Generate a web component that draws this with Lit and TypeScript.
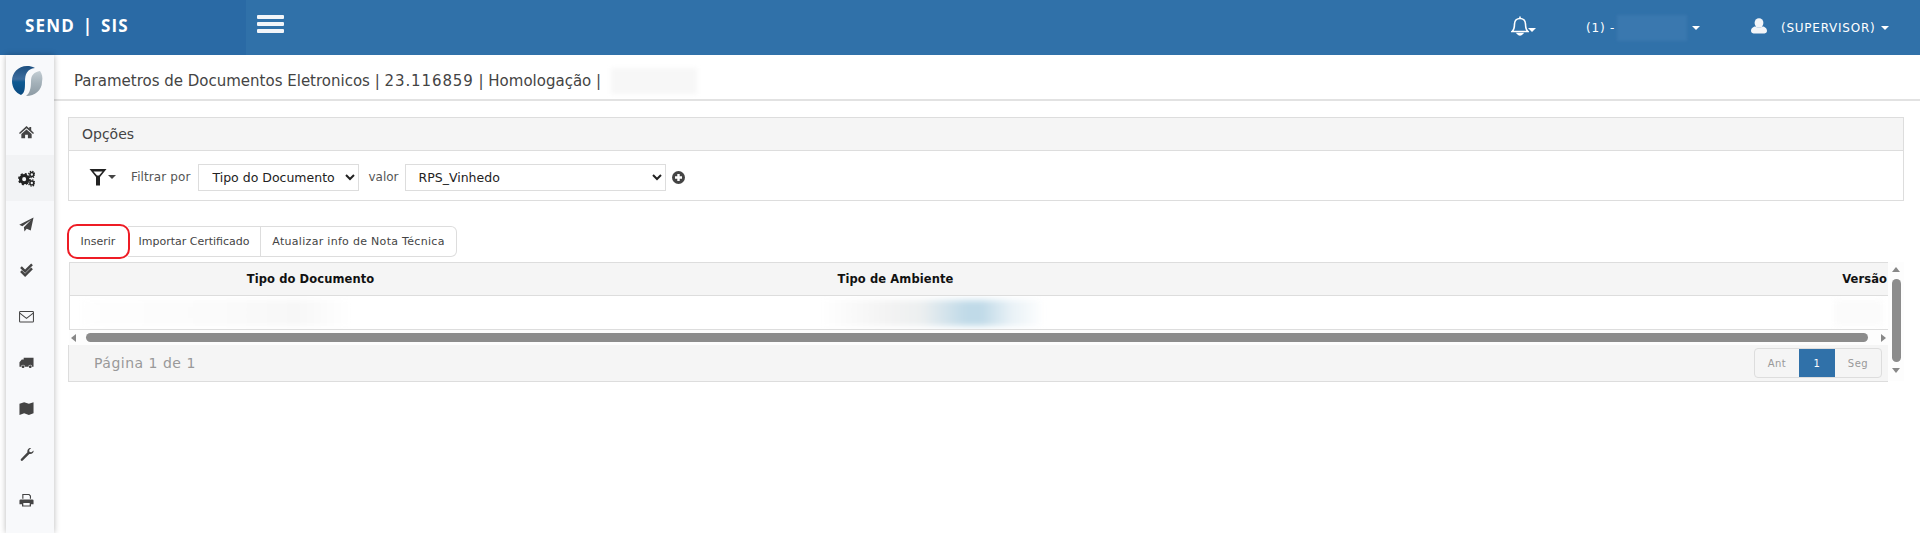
import { LitElement, html, css, svg } from "lit";
import { customElement } from "lit/decorators.js";

const icons = [
  svg`<path d="M8 1 L11 3.8 V2 H13 V5.7 L16 8.5 L15 9.6 L8 3.4 L1 9.6 L0 8.5 Z M8 4.8 L13.5 9.6 V14 H9.5 V10.5 H6.5 V14 H2.5 V9.6 Z"/>`,
  svg`<g fill="none" stroke="#222"><circle cx="5.8" cy="8.6" r="3.4" stroke-width="3"/><circle cx="5.8" cy="8.6" r="5" stroke-width="1.6" stroke-dasharray="2 1.93"/><circle cx="13" cy="4.2" r="1.8" stroke-width="1.4"/><circle cx="13" cy="4.2" r="3" stroke-width="1.1" stroke-dasharray="1.3 1.06"/><circle cx="13" cy="12.2" r="1.8" stroke-width="1.4"/><circle cx="13" cy="12.2" r="3" stroke-width="1.1" stroke-dasharray="1.3 1.06"/></g>`,
  svg`<path d="M15.5 .5 L12.5 14.5 L8.2 12.5 L5.8 15.5 L5.2 10.8 L13 3 L3.6 9.8 L.3 8.2 Z"/>`,
  svg`<path d="M1.2 5.2 L3 3.4 L6.5 6.9 L13 .5 L14.8 2.3 L6.5 10.6 Z M1.2 9.5 L3 7.7 L6.5 11.2 L13 4.8 L14.8 6.6 L6.5 14.9 Z"/>`,
  svg`<g fill="none" stroke="#444" stroke-width="1.1"><rect x=".6" y="2.6" width="14.8" height="11.2" rx=".8"/><path d="M.8 4.4 L8 10 L15.2 4.4"/></g>`,
  svg`<path d="M5 3 H15.5 V12.5 H14 a2 2 0 0 0 -4 0 H6.3 a2 2 0 0 0 -4 0 H.5 V7.8 L3 4.8 H5 Z M4.3 11 a1.5 1.5 0 1 1 -.01 0 Z M12 11 a1.5 1.5 0 1 1 -.01 0 Z"/>`,
  svg`<path d="M.5 2.8 L5.5 1.2 L10.5 2.8 L15.5 1.2 V13 L10.5 14.8 L5.5 13 L.5 14.8 Z"/>`,
  svg`<path d="M15.6 3.6 C15.8 6 13.6 8 11 7.4 L4 14.5 C2.8 15.6 1 14 2.1 12.8 L9 5.6 C8.4 3 10.4 .6 13 1 L10.8 3.2 L11.3 5.2 L13.3 5.7 Z"/>`,
  svg`<path d="M3.5 1 H11 L12.8 2.8 V6 H11.6 V3.5 L10.4 2.2 H4.7 V6 H3.5 Z M1.8 6.8 H14.2 Q15.5 6.8 15.5 8 V12 H12.8 V14.5 H3.2 V12 H.5 V8 Q.5 6.8 1.8 6.8 Z M4.6 10.6 V13.3 H11.4 V10.6 Z"/>`,
];

@customElement("app-root")
export class AppRoot extends LitElement {
  static styles = css`
    :host { display: block; height: 533px; overflow: hidden; background: #fff; font-family: "DejaVu Sans", Verdana, sans-serif; color: #333; }
    .topbar { display: flex; height: 55px; background: #3071a9; color: #fff; }
    .brand { width: 246px; background: #2a6aa5; padding: 16px 0 0 25px; box-sizing: border-box; font: bold 17px/20px "Open Sans", sans-serif; word-spacing: 2px; letter-spacing: 1.2px; }
    .burger { margin: 15px 0 0 11px; width: 27px; height: 18px; display: flex; flex-direction: column; gap: 3px; }
    .burger i { display: block; height: 4px; background: #f2f5f9; border-radius: 1px; }
    .spacer { flex: 1; }
    .notif { display: flex; align-items: flex-start; margin: 16px 0 0 0; width: 75px; }
    .caret { display: inline-block; width: 0; height: 0; border: 4px solid transparent; border-top: 4px solid #fff; border-bottom: 0; }
    .notif .caret { margin-top: 12px; margin-left: -1px; }
    .acct { display: flex; align-items: center; font-size: 12px; letter-spacing: .8px; height: 55px; width: 165px; }
    .acct .blurbox { width: 70px; height: 26px; margin: 0 5px 0 2px; background: #3a78af; filter: blur(1.5px); }
    .user { display: flex; align-items: center; font-size: 12px; letter-spacing: .75px; height: 55px; width: 169px; }
    .user svg { margin-right: 14px; margin-top: -3px; }
    .user .caret { margin-left: 6px; }
    .page { display: flex; height: 478px; }
    .side { margin-left: 6px; width: 48px; background: #f8f9fb; box-shadow: 0 0 6px rgba(0,0,0,.28); display: flex; flex-direction: column; z-index: 1; }
    .logo { height: 54px; display: flex; align-items: flex-start; padding: 10px 0 0 5px; box-sizing: border-box; }
    .nav { height: 46px; display: flex; align-items: center; justify-content: center; padding-right: 8px; box-sizing: border-box; color: #444; }
    .nav svg { fill: #444; width: 15px; height: 15px; }
    .nav.on { background: #f2f3f5; }
    .nav.on svg { width: 17px; height: 17px; }
    .main { flex: 1; min-width: 0; }
    .title { height: 46px; box-sizing: border-box; border-bottom: 2px solid #e2e2e2; padding: 15px 0 0 20px; display: flex; font-size: 15px; line-height: 22px; color: #444; }
    .num { letter-spacing: .9px; }
    .title .blur { width: 86px; height: 26px; margin: -2px 0 0 10px; background: #f7f7f7; filter: blur(2px); }
    .content { padding: 16px 16px 0 14px; }
    .panel { border: 1px solid #ddd; height: 84px; box-sizing: border-box; }
    .panel-h { height: 32px; background: #f5f5f5; border-bottom: 1px solid #ddd; padding: 0 13px; font-size: 14px; line-height: 32px; color: #444; }
    .filter { display: flex; align-items: center; height: 50px; padding: 2px 0 0 20px; box-sizing: border-box; font-size: 12px; color: #555; }
    .filter .caret { border-top-color: #444; margin: 0 0 0 1px; }
    .lbl { margin: 0 8px 0 15px; letter-spacing: .1px; }
    select { height: 27px; background: #fff; border: 1px solid #ddd; font: 12.5px "DejaVu Sans", Verdana, sans-serif; color: #222; padding: 0 0 0 9px; box-sizing: border-box; border-radius: 0; }
    .s1 { width: 161px; }
    .s2 { width: 261px; }
    .lbl2 { margin: 0 6px 0 9px; }
    .plus { margin-left: 6px; }
    .btns { display: flex; margin-top: 25px; height: 31px; position: relative; }
    .btn { border: 1px solid #ddd; border-left: 0; box-sizing: border-box; height: 31px; font-size: 11px; line-height: 29px; color: #444; display: flex; justify-content: center; }
    .b1 { width: 60px; border-left: 1px solid #ddd; border-radius: 6px 0 0 6px; border-color: transparent; position: relative; }
    .b1::after { content: ""; position: absolute; left: -2px; top: -3px; width: 63px; height: 35px; box-sizing: border-box; border: 2px solid #ee1c25; border-radius: 10px; }
    .b2 { width: 133px; }
    .b3 { width: 196px; border-radius: 0 6px 6px 0; letter-spacing: .3px; }
    .grid { display: flex; margin: 5px 0 0 1px; }
    .gridl { flex: 1; min-width: 0; }
    .tbl { border: 1px solid #ddd; border-right: 0; }
    .row { display: grid; grid-template-columns: 481px 689px 1fr; height: 32px; align-items: center; }
    .head { background: #f5f5f5; border-bottom: 1px solid #ddd; font-weight: bold; font-size: 11.5px; color: #111; text-align: center; letter-spacing: .1px; }
    .head span:last-child { text-align: right; padding-right: 1px; }
    .body { height: 33px; overflow: hidden; position: relative; }
    .b { height: 26px; filter: blur(3px); }
    .b.c1 { margin: 0 200px 0 12px; background: linear-gradient(90deg,#fefefe,#fbfbfb 50%,#f7f7f7 80%,#fff); }
    .b.c2 { margin: 0 196px 0 270px; background: linear-gradient(90deg,#fff,#f3f3f3 30%,#eceff0 45%,#c0dae8 65%,#c0dae8 72%,#e8f1f6 85%,#fff); }
    .b.c3 { margin: 0 5px 0 594px; background: #fbfbfb; }
    .hscroll { display: flex; align-items: center; height: 15px; padding: 0 2px; background: #fdfdfd; }
    .hthumb { flex: 1; height: 9px; background: #8c8c8c; border-radius: 5px; margin: 0 13px 0 10px; }
    .tri-l { width: 0; height: 0; border: 4px solid transparent; border-left: 0; border-right: 5px solid #888; }
    .tri-r { width: 0; height: 0; border: 4px solid transparent; border-right: 0; border-left: 5px solid #888; }
    .foot { display: flex; align-items: center; justify-content: space-between; height: 37px; box-sizing: border-box; margin-left: -1px; background: #f5f5f5; border: 1px solid #ddd; border-width: 0 0 1px 1px; padding: 0 6px 0 25px; font-size: 14px; letter-spacing: .5px; color: #999; }
    .pager { display: flex; height: 30px; font-size: 10px; border: 1px solid #ddd; border-radius: 4px; box-sizing: border-box; align-items: stretch; }
    .pager span { display: flex; align-items: center; justify-content: center; letter-spacing: .5px; color: #999; }
    .pager .on { background: #3071a9; color: #fff; width: 36px; }
    .pa { width: 44px; } .pb { width: 46px; }
    .vscroll { width: 16px; background: #fdfdfd; display: flex; flex-direction: column; align-items: center; height: 119px; box-sizing: border-box; padding-top: 5px; }
    .vthumb { width: 9px; height: 83px; background: #8c8c8c; border-radius: 5px; margin: 7px 0 6px; flex: none; }
    .tri-u { width: 0; height: 0; border: 4px solid transparent; border-top: 0; border-bottom: 5px solid #888; }
    .tri-d { width: 0; height: 0; border: 4px solid transparent; border-bottom: 0; border-top: 5px solid #888; }
  `;

  render() {
    return html`
      <div class="topbar">
        <div class="brand">SEND | SIS</div>
        <div class="burger"><i></i><i></i><i></i></div>
        <div class="spacer"></div>
        <div class="notif">
          <svg width="18" height="21" viewBox="0 0 18 21" fill="none" stroke="#fff" stroke-width="1.6"><path d="M1 15.5 C3.5 13.5 3.5 11 3.5 8 C3.5 4.5 6 2.5 9 2.5 C12 2.5 14.5 4.5 14.5 8 C14.5 11 14.5 13.5 17 15.5 Z"/><path d="M9 .5 V2.5" /><path d="M6.5 17.5 Q9 20.5 11.5 17.5 Z" fill="#fff"/></svg>
          <span class="caret"></span>
        </div>
        <div class="acct"><span>(1) -</span><span class="blurbox"></span><span class="caret"></span></div>
        <div class="user">
          <svg width="16" height="16" viewBox="0 0 16 16" fill="#f3f5f8"><ellipse cx="8" cy="5" rx="4.4" ry="4.8"/><path d="M0 13 C0 10 2.5 8.5 4.5 8.5 C6 10 10 10 11.5 8.5 C13.5 8.5 16 10 16 13 C16 15 14 15.5 12 15.5 H4 C2 15.5 0 15 0 13 Z"/></svg>
          <span>(SUPERVISOR)</span><span class="caret"></span>
        </div>
      </div>
      <div class="page">
        <div class="side">
          <div class="logo">
            <svg width="32" height="32" viewBox="0 0 32 32">
              <defs>
                <linearGradient id="lb" x1="0" y1="0" x2="0" y2="1"><stop offset="0" stop-color="#1c4f80"/><stop offset=".45" stop-color="#3d6d9e"/><stop offset=".55" stop-color="#0f5a92"/><stop offset="1" stop-color="#0a4a80"/></linearGradient>
                <linearGradient id="lg" x1="0" y1="0" x2="0" y2="1"><stop offset="0" stop-color="#c4ced4"/><stop offset=".5" stop-color="#a3b0b8"/><stop offset="1" stop-color="#8d9ba4"/></linearGradient>
              </defs>
              <path d="M16 1 C7 1 1 8 1 16 C1 23 5 28 10 30 C14 28 14 23 14 17 C14 9 16 4 24 3 C21 1.6 19 1 16 1 Z" fill="url(#lb)"/>
              <path d="M29 6 C31 9 32 12 31 17 C31 25 24 31 15 31 C19 28 20 23 20 16 C20 10 23 7 29 6 Z" fill="url(#lg)"/>
            </svg>
          </div>
          ${icons.map(
            (p, i) => html`<div class="nav ${i === 1 ? "on" : ""}"><svg viewBox="0 0 16 16">${p}</svg></div>`
          )}
        </div>
        <div class="main">
          <div class="title"><span>Parametros de Documentos Eletronicos | <span class="num">23.116859</span> | Homologação |</span><span class="blur"></span></div>
          <div class="content">
            <div class="panel">
              <div class="panel-h">Opções</div>
              <div class="filter">
                <svg width="18" height="18" viewBox="0 0 17 18" fill="#222"><path d="M0 1 H17 L10.5 9 V17.5 H6.5 V9 Z M4 3.4 L7.5 7.6 H9.5 L13 3.4 Z" fill-rule="evenodd"/></svg>
                <span class="caret"></span>
                <span class="lbl">Filtrar por</span>
                <select class="s1"><option>Tipo do Documento</option></select>
                <span class="lbl2">valor</span>
                <select class="s2"><option>RPS_Vinhedo</option></select>
                <svg class="plus" width="13" height="13" viewBox="0 0 13 13"><circle cx="6.5" cy="6.5" r="6.5" fill="#444"/><path d="M5.3 3 H7.7 V5.3 H10 V7.7 H7.7 V10 H5.3 V7.7 H3 V5.3 H5.3 Z" fill="#fff"/></svg>
              </div>
            </div>
            <div class="btns">
              <div class="btn b1">Inserir</div>
              <div class="btn b2">Importar Certificado</div>
              <div class="btn b3">Atualizar info de Nota Técnica</div>
            </div>
            <div class="grid">
              <div class="gridl">
                <div class="tbl">
                  <div class="row head"><span>Tipo do Documento</span><span>Tipo de Ambiente</span><span>Versão</span></div>
                  <div class="row body"><div class="b c1"></div><div class="b c2"></div><div class="b c3"></div></div>
                </div>
                <div class="hscroll"><span class="tri-l"></span><div class="hthumb"></div><span class="tri-r"></span></div>
                <div class="foot">
                  <span>Página 1 de 1</span>
                  <div class="pager"><span class="pa">Ant</span><span class="on">1</span><span class="pb">Seg</span></div>
                </div>
              </div>
              <div class="vscroll"><span class="tri-u"></span><div class="vthumb"></div><span class="tri-d"></span></div>
            </div>
          </div>
        </div>
      </div>
    `;
  }
}
